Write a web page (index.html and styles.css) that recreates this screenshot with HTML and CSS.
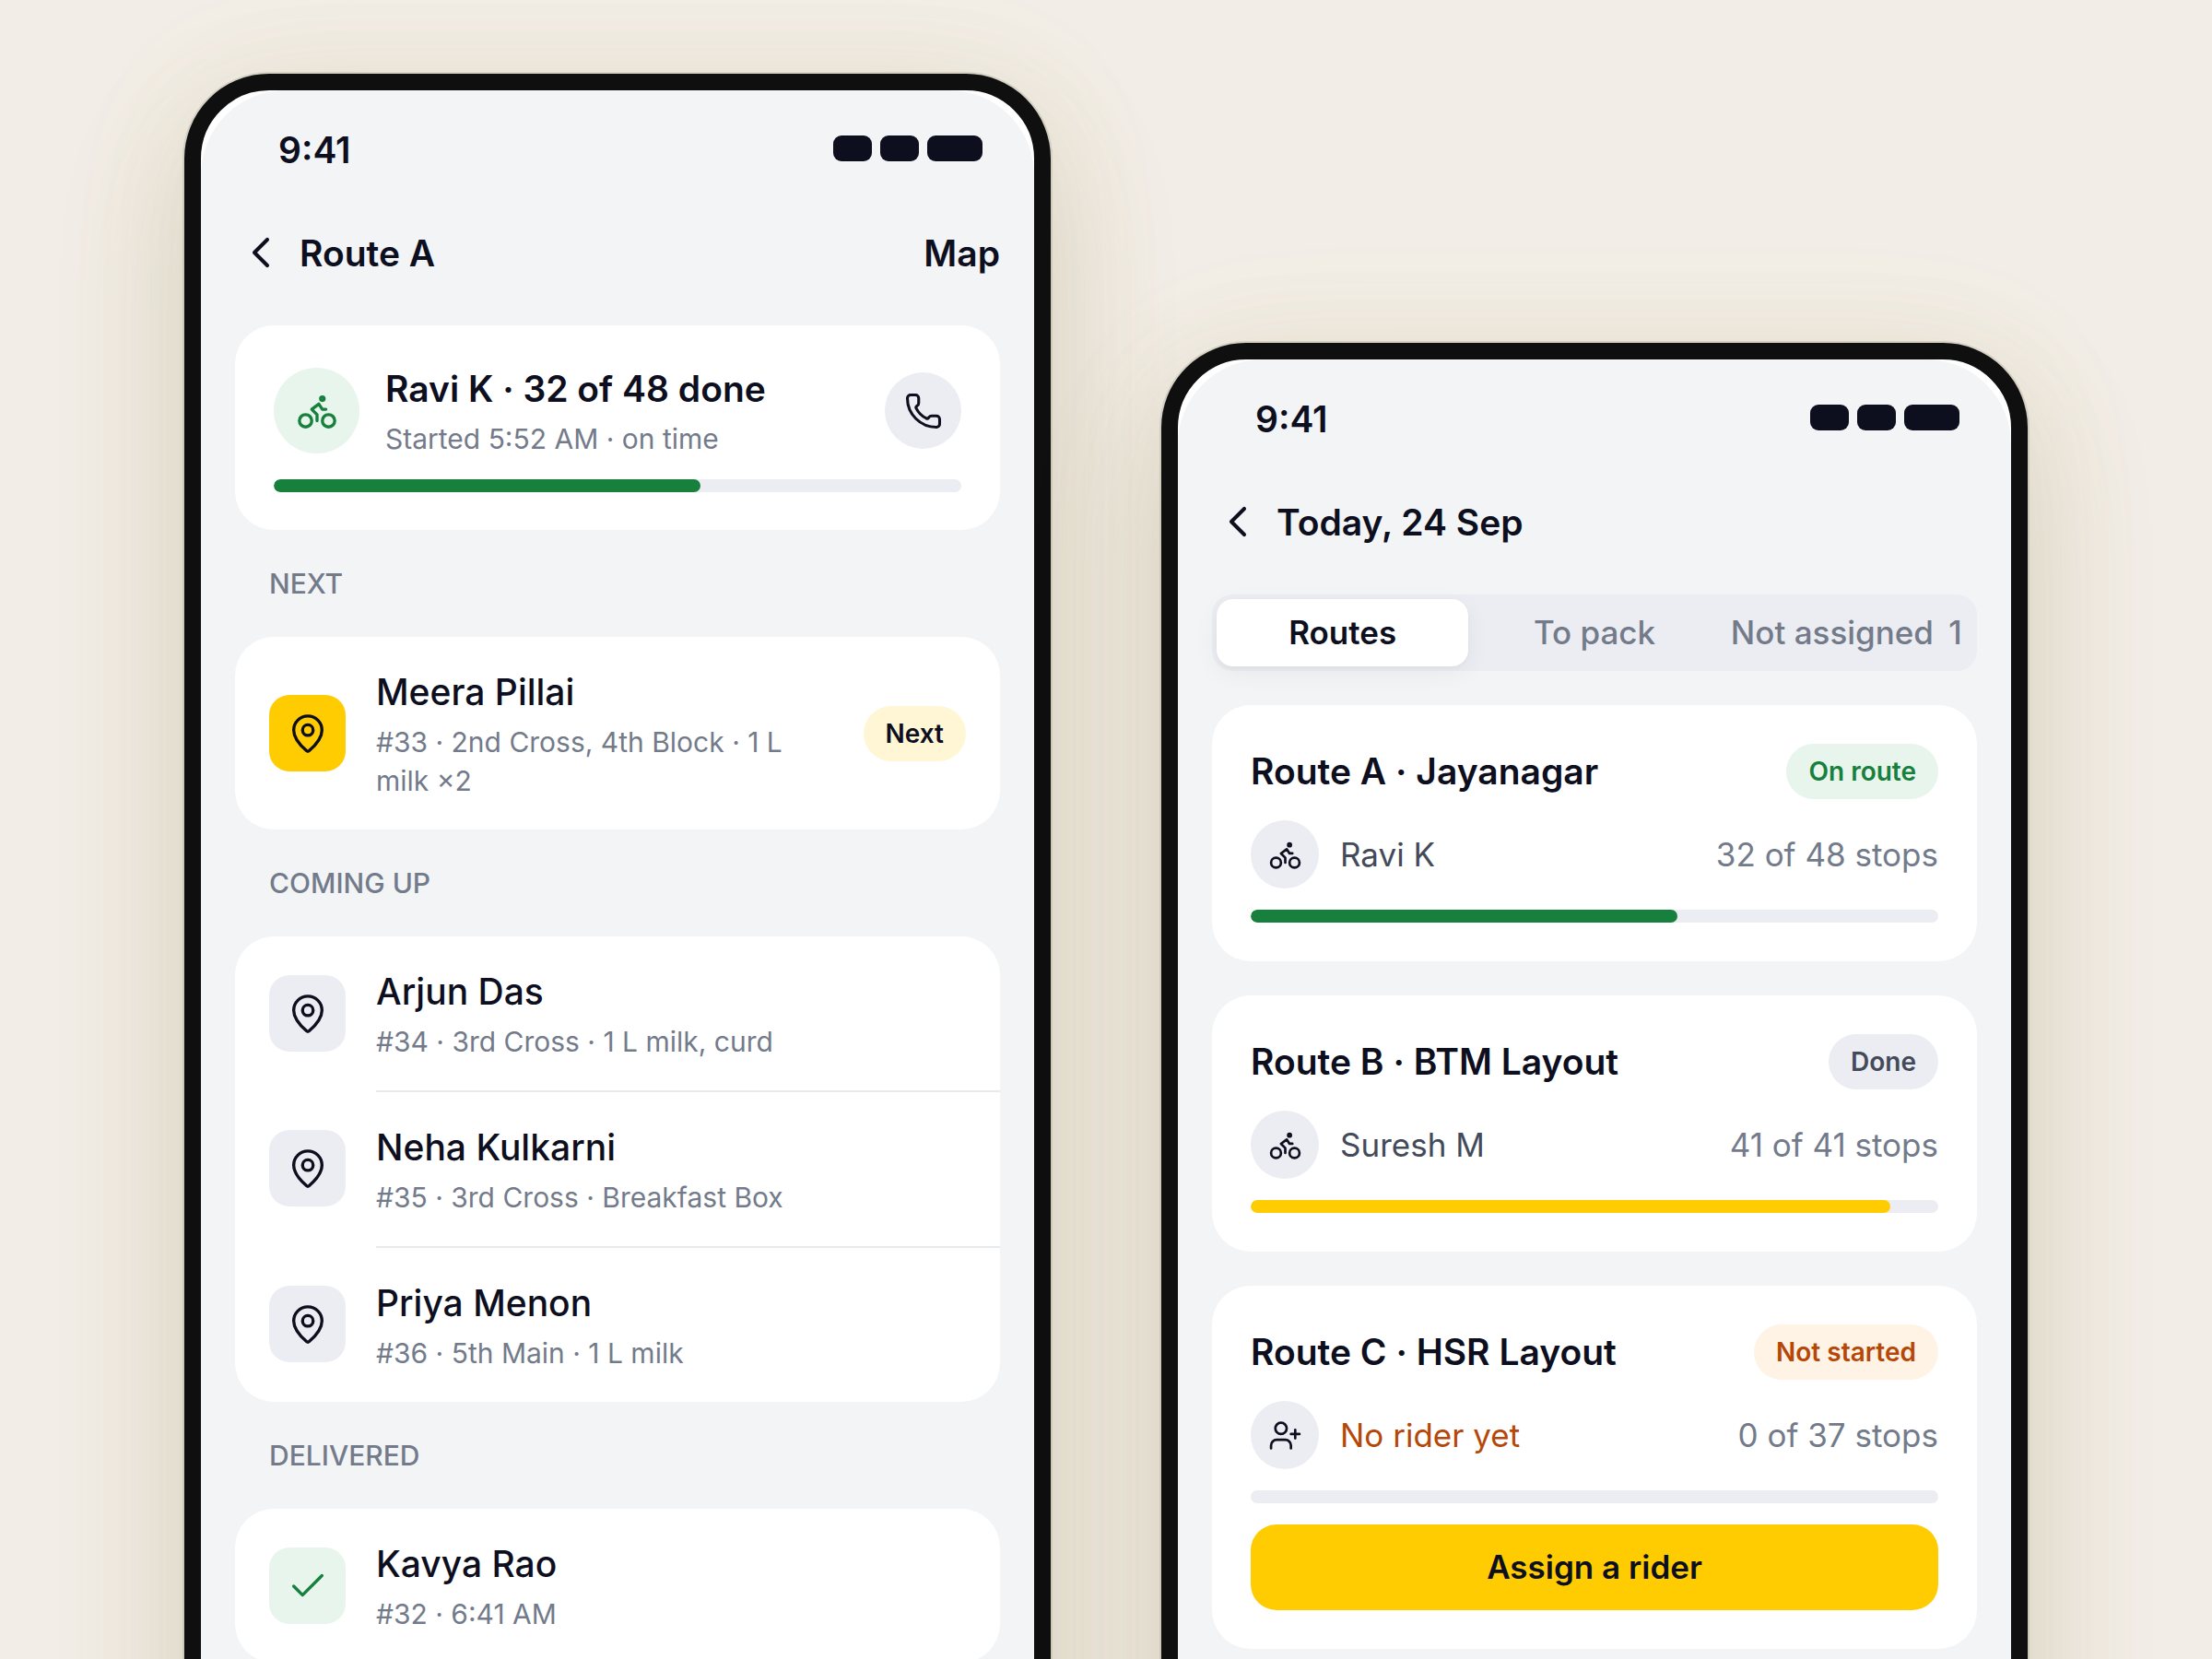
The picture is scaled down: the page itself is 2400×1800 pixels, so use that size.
FILE: index.html
```html
<!DOCTYPE html>
<html lang="en">
<head>
<meta charset="utf-8">
<meta name="viewport" content="width=device-width, initial-scale=1">
<title>Delivery routes</title>
<link rel="stylesheet" href="styles.css">
</head>
<body>
<svg class="sprite" aria-hidden="true">
  <symbol id="i-back" viewBox="0 0 24 24"><path d="m15 18-6-6 6-6"/></symbol>
  <symbol id="i-bike" viewBox="0 0 24 24"><circle cx="18.5" cy="17.5" r="3.5"/><circle cx="5.5" cy="17.5" r="3.5"/><circle cx="15" cy="5" r="1"/><path d="M12 17.5V14l-3-3 4-3 2 3h2"/></symbol>
  <symbol id="i-phone" viewBox="0 0 24 24"><path d="M13.832 16.568a1 1 0 0 0 1.213-.303l.355-.465A2 2 0 0 1 17 15h3a2 2 0 0 1 2 2v3a2 2 0 0 1-2 2A18 18 0 0 1 2 4a2 2 0 0 1 2-2h3a2 2 0 0 1 2 2v3a2 2 0 0 1-.8 1.6l-.468.351a1 1 0 0 0-.292 1.233 14 14 0 0 0 6.392 6.384"/></symbol>
  <symbol id="i-pin" viewBox="0 0 24 24"><path d="M20 10c0 4.993-5.539 10.193-7.399 11.799a1 1 0 0 1-1.202 0C9.539 20.193 4 14.993 4 10a8 8 0 0 1 16 0"/><circle cx="12" cy="10" r="3"/></symbol>
  <symbol id="i-check" viewBox="0 0 24 24"><path d="M20 6 9 17l-5-5"/></symbol>
  <symbol id="i-user-plus" viewBox="0 0 24 24"><path d="M16 21v-2a4 4 0 0 0-4-4H6a4 4 0 0 0-4 4v2"/><circle cx="9" cy="7" r="4"/><path d="M19 8v6M22 11h-6"/></symbol>
</svg>

<main class="stage">
  <section class="phone" aria-label="Route A">
    <div class="screen">
      <div class="status">
        <span>9:41</span>
        <span class="status-icons"><i></i><i></i><i class="wide"></i></span>
      </div>
      <header class="bar">
        <button class="back" aria-label="Back"><svg><use href="#i-back"/></svg></button>
        <h1>Route A</h1>
        <a class="bar-link" href="#map">Map</a>
      </header>

      <article class="card summary">
        <div class="summary-row">
          <span class="avatar avatar-lg green"><svg><use href="#i-bike"/></svg></span>
          <div class="text">
            <h2 class="title strong">Ravi K · 32 of 48 done</h2>
            <p class="sub">Started 5:52 AM · on time</p>
          </div>
          <button class="call" aria-label="Call Ravi K"><svg><use href="#i-phone"/></svg></button>
        </div>
        <div class="track"><div class="fill" style="width:62%"></div></div>
      </article>

      <h2 class="label">NEXT</h2>
      <ul class="card list">
        <li class="stop">
          <span class="tile yellow"><svg><use href="#i-pin"/></svg></span>
          <div class="stop-body">
            <div class="text">
              <h3 class="title">Meera Pillai</h3>
              <p class="sub">#33 · 2nd Cross, 4th Block · 1 L milk ×2</p>
            </div>
            <span class="badge badge-next">Next</span>
          </div>
        </li>
      </ul>

      <h2 class="label">COMING UP</h2>
      <ul class="card list">
        <li class="stop">
          <span class="tile"><svg><use href="#i-pin"/></svg></span>
          <div class="stop-body">
            <div class="text">
              <h3 class="title">Arjun Das</h3>
              <p class="sub">#34 · 3rd Cross · 1 L milk, curd</p>
            </div>
          </div>
        </li>
        <li class="stop">
          <span class="tile"><svg><use href="#i-pin"/></svg></span>
          <div class="stop-body">
            <div class="text">
              <h3 class="title">Neha Kulkarni</h3>
              <p class="sub">#35 · 3rd Cross · Breakfast Box</p>
            </div>
          </div>
        </li>
        <li class="stop">
          <span class="tile"><svg><use href="#i-pin"/></svg></span>
          <div class="stop-body">
            <div class="text">
              <h3 class="title">Priya Menon</h3>
              <p class="sub">#36 · 5th Main · 1 L milk</p>
            </div>
          </div>
        </li>
      </ul>

      <h2 class="label">DELIVERED</h2>
      <ul class="card list">
        <li class="stop">
          <span class="tile green"><svg><use href="#i-check"/></svg></span>
          <div class="stop-body">
            <div class="text">
              <h3 class="title">Kavya Rao</h3>
              <p class="sub">#32 · 6:41 AM</p>
            </div>
          </div>
        </li>
      </ul>
    </div>
  </section>

  <section class="phone phone-low" aria-label="Today">
    <div class="screen">
      <div class="status">
        <span>9:41</span>
        <span class="status-icons"><i></i><i></i><i class="wide"></i></span>
      </div>
      <header class="bar">
        <button class="back" aria-label="Back"><svg><use href="#i-back"/></svg></button>
        <h1>Today, 24 Sep</h1>
      </header>

      <div class="tabs" role="tablist">
        <button class="tab active" role="tab" aria-selected="true">Routes</button>
        <button class="tab" role="tab" aria-selected="false">To pack</button>
        <button class="tab" role="tab" aria-selected="false">Not assigned <span class="count">1</span></button>
      </div>

      <div class="routes">
        <article class="card route">
          <div class="route-head">
            <h2 class="title strong">Route A · Jayanagar</h2>
            <span class="badge badge-green">On route</span>
          </div>
          <div class="rider">
            <span class="avatar"><svg><use href="#i-bike"/></svg></span>
            <span class="name">Ravi K</span>
            <span class="stops">32 of 48 stops</span>
          </div>
          <div class="track"><div class="fill" style="width:62%"></div></div>
        </article>

        <article class="card route">
          <div class="route-head">
            <h2 class="title strong">Route B · BTM Layout</h2>
            <span class="badge badge-grey">Done</span>
          </div>
          <div class="rider">
            <span class="avatar"><svg><use href="#i-bike"/></svg></span>
            <span class="name">Suresh M</span>
            <span class="stops">41 of 41 stops</span>
          </div>
          <div class="track"><div class="fill fill-yellow" style="width:93%"></div></div>
        </article>

        <article class="card route">
          <div class="route-head">
            <h2 class="title strong">Route C · HSR Layout</h2>
            <span class="badge badge-orange">Not started</span>
          </div>
          <div class="rider">
            <span class="avatar"><svg><use href="#i-user-plus"/></svg></span>
            <span class="name missing">No rider yet</span>
            <span class="stops">0 of 37 stops</span>
          </div>
          <div class="track"></div>
          <button class="primary">Assign a rider</button>
        </article>
      </div>
    </div>
  </section>
</main>
</body>
</html>
```
FILE: styles.css
```css
:root {
  --ink: #0d0f1f;
  --muted: #737b8b;
  --fill: #ecedf2;
  --screen: #f2f4f6;
  --green: #17803d;
  --green-soft: #e7f5ed;
  --yellow: #ffcc02;
  --orange: #b54708;
}

* { box-sizing: border-box; }

html { height: 100%; }

body {
  margin: 0;
  height: 100%;
  overflow: hidden;
  background: #f2ede6;
  color: var(--ink);
  font-family: Inter, "Liberation Sans", sans-serif;
  font-size: 30px;
  line-height: 42px;
}

h1, h2, h3, p, ul { margin: 0; padding: 0; font: inherit; }
ul { list-style: none; }
button { margin: 0; padding: 0; border: 0; background: none; color: inherit; font: inherit; }
svg { display: block; fill: none; stroke: currentColor; stroke-width: 1.75; stroke-linecap: round; stroke-linejoin: round; }
.sprite { position: absolute; width: 0; height: 0; }

.stage {
  display: grid;
  grid-template-columns: 1fr 1fr;
  align-items: start;
  gap: 6%;
  height: 100%;
  padding: 80px 200px 0;
}

.phone {
  display: grid;
  min-height: 110vh;
  border: 18px solid #0e0f0e;
  border-radius: 92px;
  background: #fff;
  box-shadow:
    0 0 0 2px rgba(20, 30, 10, 0.1),
    0 10px 140px rgba(210, 210, 90, 0.08),
    0 60px 140px rgba(112, 92, 45, 0.2);
}
.phone-low { margin-top: 292px; }

.screen {
  min-width: 0;
  padding: 39px 37px;
  border-radius: 92px;
  background: var(--screen);
}

.status, .bar { font-size: 39px; line-height: 51px; font-weight: 600; }
.status {
  display: flex;
  align-items: center;
  justify-content: space-between;
  padding: 0 19px 0 47px;
}
.status-icons { display: flex; gap: 9px; padding-bottom: 4px; }
.status-icons i { width: 42px; height: 28px; border-radius: 9px; background: var(--ink); }
.status-icons .wide { width: 60px; }

.bar {
  display: flex;
  align-items: center;
  gap: 14px;
  height: 56px;
  margin: 58px 0 51px;
}
.back svg { width: 56px; height: 56px; }
.bar-link { margin-left: auto; color: inherit; text-decoration: none; }

.card { border-radius: 42px; background: #fff; }

.title { font-size: 39px; line-height: 56px; font-weight: 500; }
.strong { font-weight: 600; }
.sub { color: var(--muted); }
.text { display: flex; flex: 1; flex-direction: column; gap: 5px; min-width: 0; }

.summary { padding: 41px 42px; }
.summary-row { display: flex; align-items: center; gap: 28px; margin-bottom: 23px; }

.avatar {
  display: grid;
  place-items: center;
  flex: none;
  width: 74px;
  height: 74px;
  border-radius: 50%;
  background: var(--fill);
}
.avatar svg { width: 37px; height: 37px; }
.avatar-lg { width: 93px; height: 93px; }
.avatar-lg svg { width: 46px; height: 46px; }
.green.avatar, .green.tile { background: var(--green-soft); color: var(--green); }

.call {
  display: grid;
  place-items: center;
  width: 83px;
  height: 83px;
  border-radius: 50%;
  background: var(--fill);
}
.call svg { width: 42px; height: 42px; }

.track { height: 14px; overflow: hidden; border-radius: 7px; background: var(--fill); }
.fill { height: 100%; border-radius: 7px; background: var(--green); }
.fill-yellow { background: var(--yellow); }

.label { padding: 37px; color: var(--muted); font-weight: 500; }

.list { overflow: hidden; }
.stop { display: flex; align-items: center; gap: 33px; padding-left: 37px; }
.stop-body {
  display: flex;
  flex: 1;
  align-items: center;
  gap: 28px;
  min-width: 0;
  padding: 32px 37px 32px 0;
}
.stop + .stop .stop-body { border-top: 2px solid #e8e9ed; }
.tile {
  display: grid;
  place-items: center;
  flex: none;
  width: 83px;
  height: 83px;
  border-radius: 22px;
  background: var(--fill);
}
.tile svg { width: 46px; height: 46px; }
.tile.yellow { background: var(--yellow); }

.badge {
  flex: none;
  padding: 9px 24px;
  border-radius: 30px;
  font-size: 28px;
  font-weight: 600;
}
.badge-next { background: #fff6d6; }
.badge-green { background: var(--green-soft); color: var(--green); }
.badge-grey { background: var(--fill); color: #434a5a; }
.badge-orange { background: #fff3e5; color: var(--orange); }

.tabs {
  display: grid;
  grid-template-columns: repeat(3, 1fr);
  padding: 5px;
  border-radius: 22px;
  background: var(--fill);
}
.tab {
  height: 73px;
  border-radius: 18px;
  color: var(--muted);
  font-size: 35px;
  line-height: 41px;
  font-weight: 500;
  white-space: nowrap;
}
.tab.active {
  background: #fff;
  color: var(--ink);
  font-weight: 600;
  box-shadow: 0 7px 28px rgba(13, 15, 31, 0.05), 0 2px 5px rgba(13, 15, 31, 0.03);
}
.count { margin-left: 7px; }

.routes { display: flex; flex-direction: column; gap: 37px; padding-top: 37px; }
.route { display: flex; flex-direction: column; gap: 23px; padding: 42px; }
.route-head { display: flex; align-items: center; justify-content: space-between; }
.rider { display: flex; align-items: center; gap: 23px; font-size: 35px; line-height: 41px; }
.name { color: #434a5a; }
.name.missing { color: var(--orange); }
.stops { margin-left: auto; color: var(--muted); }

.primary {
  height: 93px;
  border-radius: 28px;
  background: var(--yellow);
  font-size: 35px;
  line-height: 41px;
  font-weight: 600;
}
```
